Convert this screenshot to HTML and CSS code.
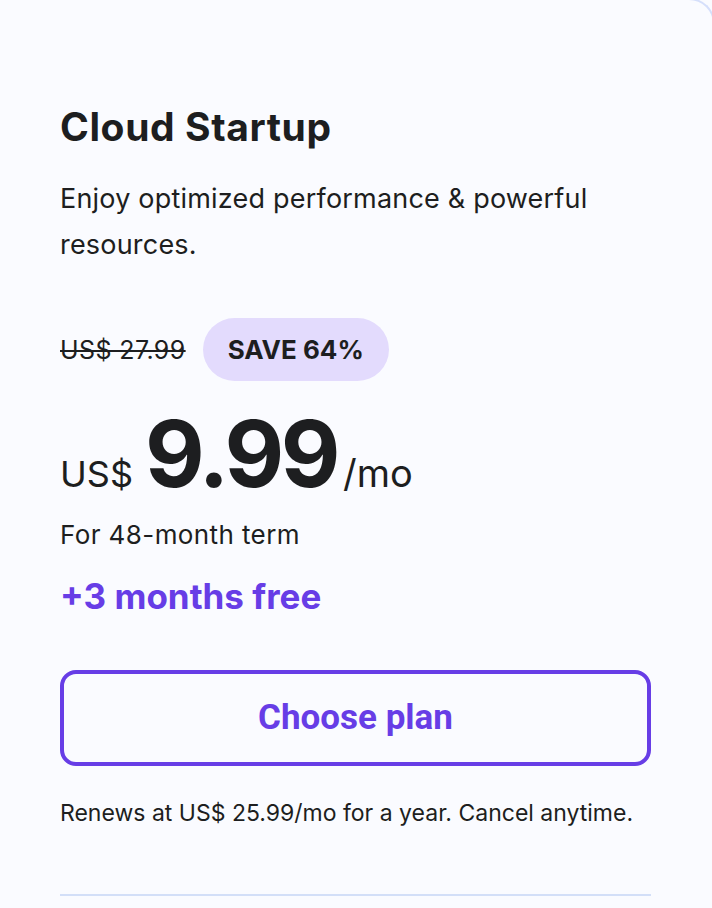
FILE: index.html
```html
<!DOCTYPE html>
<html lang="en">
<head>
<meta charset="utf-8">
<title>Cloud Startup</title>
<link rel="stylesheet" href="styles.css">
</head>
<body>
<div class="card">
  <h2 class="title">Cloud Startup</h2>
  <p class="desc">Enjoy optimized performance &amp; powerful resources.</p>
  <div class="old-row">
    <span class="old-price">US$ 27.99</span>
    <span class="badge">SAVE 64%</span>
  </div>
  <div class="price">
    <span class="cur">US$</span>
    <span class="amount">9.99</span>
    <span class="per">/mo</span>
  </div>
  <p class="term">For 48-month term</p>
  <p class="bonus">+3 months free</p>
  <button class="btn">Choose plan</button>
  <p class="renew">Renews at US$ 25.99/mo for a year. Cancel anytime.</p>
  <div class="divider"></div>
</div>
</body>
</html>
```

FILE: styles.css
```css
html, body {
  margin: 0;
  padding: 0;
  height: 908px;
  background: #fafbff;
  overflow: hidden;
}
body {
  font-family: Inter, "DejaVu Sans", sans-serif;
  color: #1d1e20;
}
.card {
  box-sizing: border-box;
  margin: -2px -3px 0 -30px;
  padding: 105px 62px 0 88px;
  border: 2px solid #d5dffb;
  border-bottom: none;
  border-radius: 26px 26px 0 0;
  background: #fafbff;
  height: 910px;
}
.title {
  margin: 0;
  font-size: 39px;
  line-height: 44px;
  font-weight: 700;
  letter-spacing: 0.6px;
}
.desc {
  margin: 27px 0 0;
  font-size: 27px;
  line-height: 46px;
  font-weight: 400;
  letter-spacing: 0.2px;
}
.old-row {
  margin-top: 50px;
  display: flex;
  align-items: center;
  gap: 17px;
}
.old-price {
  font-size: 25px;
  letter-spacing: 0.4px;
  text-decoration: line-through;
  text-decoration-thickness: 2px;
}
.badge {
  display: inline-flex;
  align-items: center;
  height: 63px;
  padding: 0 25px;
  border-radius: 32px;
  background: #e3dbfd;
  font-size: 26px;
  font-weight: 700;
}
.price {
  margin-top: 26.5px;
  display: flex;
  align-items: baseline;
  line-height: 1;
}
.cur {
  font-size: 36px;
  margin-right: 12px;
}
.amount {
  font-size: 92px;
  font-weight: 700;
  letter-spacing: -3.5px;
}
.per {
  font-size: 38px;
  margin-left: 6px;
}
.term {
  margin: 19px 0 0;
  font-size: 26px;
  line-height: 32px;
  letter-spacing: 0.4px;
}
.bonus {
  margin: 25.7px 0 0;
  font-size: 35px;
  line-height: 40px;
  font-weight: 700;
  color: #673de6;
}
.btn {
  display: block;
  margin-top: 53.7px;
  width: 100%;
  height: 96px;
  border: 4px solid #673de6;
  border-radius: 16px;
  background: transparent;
  font-family: Roboto, Inter, sans-serif;
  font-size: 35px;
  font-weight: 700;
  color: #673de6;
}
.renew {
  margin: 32.6px 0 0;
  font-size: 23px;
  line-height: 30px;
}
.divider {
  margin-top: 65.4px;
  height: 2px;
  background: #d3dff8;
}
```
